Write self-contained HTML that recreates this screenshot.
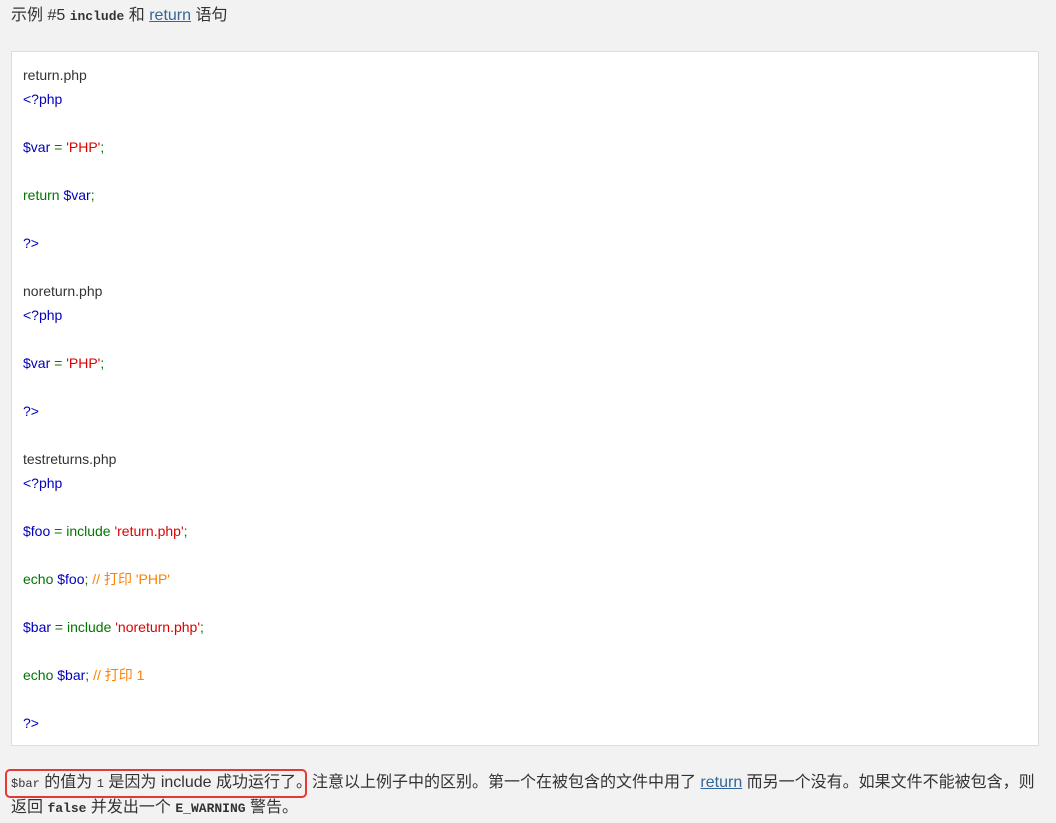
<!DOCTYPE html>
<html><head><meta charset="utf-8"><style>
body{margin:0;background:#f2f2f2;font-family:"Liberation Sans","Noto Sans CJK SC",sans-serif;color:#333;font-size:15px;width:1056px;height:823px;overflow:hidden}
.h{position:absolute;left:11px;top:4px;line-height:24px;font-size:16px}
a{color:#369;text-decoration:underline}
code.b{font-family:"Liberation Mono",monospace;font-weight:bold;font-size:13px}
.box{position:absolute;left:11px;top:51px;width:1026px;height:693px;background:#fff;border:1px solid #ddd}
.code{position:absolute;left:11px;top:11px;font-size:14px;line-height:24px;white-space:pre;color:#333}
.g{color:#007700}.bl{color:#0000BB}.r{color:#DD0000}.o{color:#FF8000}
.p{position:absolute;left:11px;top:771px;width:1030px;line-height:24px;font-size:16px}
.hl{position:absolute;left:5px;top:769px;width:298px;height:25px;border:2px solid #e53935;border-radius:5px}
.m{font-family:"Liberation Mono",monospace;font-size:12px}
</style></head><body>
<div class="h">示例 #5 <code class="b">include</code> 和 <a>return</a> 语句</div>
<div class="box"><div class="code">return.php
<span class="bl">&lt;?php</span>

<span class="bl">$var </span><span class="g">= </span><span class="r">'PHP'</span><span class="g">;</span>

<span class="g">return </span><span class="bl">$var</span><span class="g">;</span>

<span class="bl">?&gt;</span>

noreturn.php
<span class="bl">&lt;?php</span>

<span class="bl">$var </span><span class="g">= </span><span class="r">'PHP'</span><span class="g">;</span>

<span class="bl">?&gt;</span>

testreturns.php
<span class="bl">&lt;?php</span>

<span class="bl">$foo </span><span class="g">= include </span><span class="r">'return.php'</span><span class="g">;</span>

<span class="g">echo </span><span class="bl">$foo</span><span class="g">; </span><span class="o">// 打印 'PHP'</span>

<span class="bl">$bar </span><span class="g">= include </span><span class="r">'noreturn.php'</span><span class="g">;</span>

<span class="g">echo </span><span class="bl">$bar</span><span class="g">; </span><span class="o">// 打印 1</span>

<span class="bl">?&gt;</span></div></div>
<div class="hl"></div>
<div class="p"><span class="m">$bar</span> 的值为 <span class="m">1</span> 是因为 include 成功运行了。注意以上例子中的区别。第一个在被包含的文件中用了 <a>return</a> 而另一个没有。如果文件不能被包含，则返回 <code class="b">false</code> 并发出一个 <code class="b">E_WARNING</code> 警告。</div>
</body></html>
